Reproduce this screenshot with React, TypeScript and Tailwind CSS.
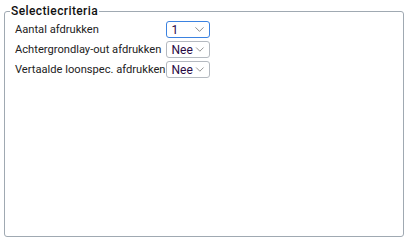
import { ChevronDown } from "lucide-react";

const rows = [
  { label: "Aantal afdrukken", value: "1", focused: true },
  { label: "Achtergrondlay-out afdrukken", value: "Nee", focused: false },
  { label: "Vertaalde loonspec. afdrukken", value: "Nee", focused: false },
];

function Select({ value, focused }: { value: string; focused: boolean }) {
  return (
    <div
      className={
        "flex items-center justify-between h-[17px] w-[44px] pl-[5px] pr-[2px] rounded-[3px] bg-white border " +
        (focused ? "border-[#3b82e0]" : "border-[#b4b9c0]")
      }
    >
      <span className="text-[12px] leading-none text-[#2a0a45]">{value}</span>
      <ChevronDown size={15} strokeWidth={1.2} className="text-[#666]" />
    </div>
  );
}

export default function App() {
  return (
    <div className="w-[408px] h-[242px] bg-white pt-[4px] px-[4px] font-['Roboto',sans-serif] text-[#222]">
      <fieldset className="h-[233px] border border-[#a0a9b2] rounded-[3px] px-[5px] pt-[3px] m-0">
        <legend className="px-[1px] text-[12px] font-medium tracking-[0.4px] leading-[14px] text-[#111]">
          Selectiecriteria
        </legend>
        <div className="grid grid-cols-[auto_auto] justify-start gap-y-[3px] items-center pl-[5px]">
          {rows.map((r) => (
            <div key={r.label} className="contents">
              <span className="text-[11.15px] leading-[17px]">{r.label}</span>
              <Select value={r.value} focused={r.focused} />
            </div>
          ))}
        </div>
      </fieldset>
    </div>
  );
}
